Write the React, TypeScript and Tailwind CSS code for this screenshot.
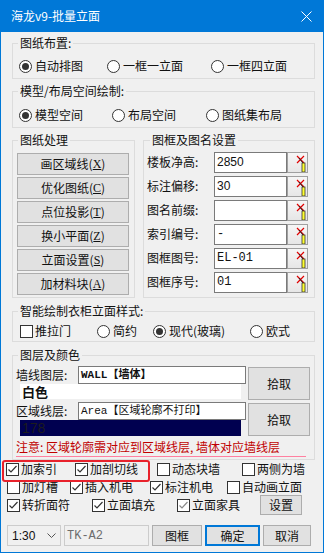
import React from "react";

function Radio({ checked, label }: { checked?: boolean; label: string }) {
  return (
    <div className="flex items-center">
      <span className="w-[13px] h-[13px] rounded-full border border-[#333333] bg-white flex items-center justify-center shrink-0">
        {checked ? <span className="w-[7px] h-[7px] rounded-full bg-[#333333]" /> : null}
      </span>
      <span className="ml-[3px] whitespace-nowrap">{label}</span>
    </div>
  );
}

function Check({ checked, label, gray }: { checked?: boolean; label: string; gray?: boolean }) {
  return (
    <div className="flex items-center">
      <span className="w-[13px] h-[13px] border border-[#333333] bg-white flex items-center justify-center shrink-0">
        {checked ? (
          <svg width="11" height="11" viewBox="0 0 11 11">
            <path d="M1.5 5.5 L4 8 L9.5 2" fill="none" stroke={gray ? "#8a8a8a" : "#333333"} strokeWidth="1.2" />
          </svg>
        ) : null}
      </span>
      <span className="ml-[2px] whitespace-nowrap">{label}</span>
    </div>
  );
}

function PickIcon() {
  return (
    <div className="w-[21px] h-[21px] border border-[#a0a0a0] bg-[linear-gradient(#f6f6f6,#e6e6e6)] shrink-0 relative">
      <svg width="19" height="19" viewBox="0 0 19 19" className="absolute left-0 top-0">
        <path d="M9 3 L16 10 M16 3 L9 10" stroke="#e00000" strokeWidth="1.2" fill="none" />
        <path d="M11 5 L15 10" stroke="#222" strokeWidth="1" fill="none" />
        <rect x="14" y="10" width="3" height="9" fill="#ffff30" stroke="#333" strokeWidth="0.8" />
      </svg>
    </div>
  );
}

function Btn({ label, k }: { label: string; k: string }) {
  return (
    <div className="h-[22px] w-[112px] bg-[#e1e1e1] border border-[#adadad] flex items-center justify-center text-[12px] leading-[16px]">
      {label}(<span className="underline underline-offset-[1px] font-['Liberation_Serif',serif]">{k}</span>)
    </div>
  );
}

function Field({ label, value, serif }: { label: string; value: string; serif?: boolean }) {
  return (
    <div className="h-[22px] flex items-center">
      <div className="w-[67px] whitespace-nowrap">{label}</div>
      <div
        className={
          serif
            ? "w-[73px] h-[21px] bg-white border border-[#7a7a7a] pl-[2px] flex items-center font-['Liberation_Mono',monospace] text-[12px]"
            : "w-[73px] h-[21px] bg-white border border-[#7a7a7a] pl-[2px] flex items-center font-['Liberation_Sans',sans-serif] text-[12px]"
        }
      >
        {value}
      </div>
      <PickIcon />
    </div>
  );
}

export default function App() {
  return (
    <div className="w-[324px] h-[553px] bg-[#0078d7] flex flex-col relative overflow-hidden font-['Noto_Sans_CJK_SC','Noto_Sans',sans-serif] text-[12px] leading-[16px] text-[#111111]">
      {/* title bar */}
      <div className="h-[32px] flex items-center justify-between pl-[11px] pr-[12px] text-white text-[12px]">
        <span>海龙v9-批量立面</span>
        <svg width="11" height="11" viewBox="0 0 11 11">
          <path d="M0.5 0.5 L10.5 10.5 M10.5 0.5 L0.5 10.5" stroke="white" strokeWidth="1" />
        </svg>
      </div>
      {/* body */}
      <div className="flex-1 mx-[1px] mb-[1px] bg-[#f0f0f0] flex flex-col pt-[3px]">
        {/* group 1 */}
        <fieldset className="ml-[11px] w-[303px] border border-[#dcdcdc]">
          <legend className="ml-[5px] px-[2px] leading-[16px]">图纸布置:</legend>
          <div className="h-[27px] pt-[3px] flex items-center pl-[6px]">
            <div className="w-[88px]"><Radio checked label="自动排图" /></div>
            <div className="w-[104px]"><Radio label="一框一立面" /></div>
            <div><Radio label="一框四立面" /></div>
          </div>
        </fieldset>
        {/* group 2 */}
        <fieldset className="ml-[11px] mt-[4px] w-[303px] border border-[#dcdcdc]">
          <legend className="ml-[5px] px-[2px] leading-[16px]">模型/布局空间绘制:</legend>
          <div className="h-[28px] pt-[4px] flex items-center pl-[6px]">
            <div className="w-[93px]"><Radio checked label="模型空间" /></div>
            <div className="w-[94px]"><Radio label="布局空间" /></div>
            <div><Radio label="图纸集布局" /></div>
          </div>
        </fieldset>
        {/* group 3 */}
        <div className="ml-[11px] mt-[4px] flex gap-[8px]">
          <fieldset className="w-[123px] border border-[#dcdcdc]">
            <legend className="ml-[5px] px-[2px] leading-[16px]">图纸处理</legend>
            <div className="pt-[5px] pb-[2px] pl-[4px] flex flex-col gap-[2px]">
              <Btn label="画区域线" k="X" />
              <Btn label="优化图纸" k="C" />
              <Btn label="点位投影" k="T" />
              <Btn label="换小平面" k="Z" />
              <Btn label="立面设置" k="S" />
              <Btn label="加材料块" k="A" />
            </div>
          </fieldset>
          <fieldset className="w-[172px] border border-[#dcdcdc]">
            <legend className="ml-[6px] px-[2px] leading-[16px]">图框及图名设置</legend>
            <div className="pt-[3px] pb-[4px] pl-[3px] flex flex-col gap-[2px]">
              <Field label="楼板净高:" value="2850" />
              <Field label="标注偏移:" value="30" />
              <Field label="图名前缀:" value="" />
              <Field label="索引编号:" value="-" serif />
              <Field label="图框图号:" value="EL-01" serif />
              <Field label="图框序号:" value="01" serif />
            </div>
          </fieldset>
        </div>
        {/* group 4 */}
        <fieldset className="ml-[11px] mt-[5px] w-[303px] border border-[#dcdcdc]">
          <legend className="ml-[5px] px-[2px] leading-[16px]">智能绘制衣柜立面样式:</legend>
          <div className="h-[22px] pt-[2px] flex items-center pl-[7px]">
            <div className="w-[77px]"><Check label="推拉门" /></div>
            <div className="w-[56px]"><Radio label="简约" /></div>
            <div className="w-[97px]"><Radio checked label="现代(玻璃)" /></div>
            <div><Radio label="欧式" /></div>
          </div>
        </fieldset>
        {/* group 5 */}
        <fieldset className="ml-[11px] mt-[5px] w-[303px] border border-[#dcdcdc]">
          <legend className="ml-[5px] px-[2px] leading-[16px]">图层及颜色</legend>
          <div className="pt-[3px] pb-[2px] pl-[3px] flex flex-col">
            <div className="flex h-[34px]">
              <div className="w-[232px] flex flex-col">
                <div className="flex items-center h-[18px]">
                  <div className="w-[62px] leading-[14px]">墙线图层:</div>
                  <div className="w-[168px] h-[18px] bg-white border border-[#7a7a7a] pl-[2px] flex items-center font-['Liberation_Mono','Noto_Sans_CJK_SC',monospace] font-bold text-[11px]">WALL【墙体】</div>
                </div>
                <div className="ml-[4px] w-[221px] h-[15px] bg-white flex items-center pl-[2px] text-[13px] font-bold leading-[13px]">白色</div>
              </div>
              <div className="w-[62px] h-[33px] mt-[1px] bg-[#e1e1e1] border border-[#adadad] flex items-center justify-center text-[12px]">拾取</div>
            </div>
            <div className="flex h-[35px] mt-[2px]">
              <div className="w-[232px] flex flex-col">
                <div className="flex items-center h-[18px]">
                  <div className="w-[62px] leading-[14px]">区域线层:</div>
                  <div className="w-[168px] h-[18px] bg-white border border-[#7a7a7a] pl-[2px] flex items-center font-['Liberation_Mono','Noto_Sans_CJK_SC',monospace] text-[11px] whitespace-nowrap overflow-hidden">Area【区域轮廓不打印】</div>
                </div>
                <div className="ml-[4px] w-[221px] h-[16px] bg-[#000050] flex items-center pl-[2px] text-[14px] leading-[16px] text-[#1c1c1c] font-['Liberation_Sans',sans-serif]">178</div>
              </div>
              <div className="w-[62px] h-[33px] mt-[1px] bg-[#e1e1e1] border border-[#adadad] flex items-center justify-center text-[12px]">拾取</div>
            </div>
            <div className="h-[20px] w-[290px] flex items-center border-b border-[#ff80a0] text-[#c00000] whitespace-nowrap">
              注意: 区域轮廓需对应到区域线层, 墙体对应墙线层
            </div>
          </div>
        </fieldset>
        {/* checkbox rows */}
        <div className="mt-[1px] h-[16px] flex items-center pl-[5px]">
          <div className="w-[69px]"><Check checked label="加索引" /></div>
          <div className="w-[82px]"><Check checked label="加剖切线" /></div>
          <div className="w-[85px]"><Check label="动态块墙" /></div>
          <div><Check label="两侧为墙" /></div>
        </div>
        <div className="mt-[2px] h-[16px] flex items-center pl-[6px]">
          <div className="w-[63px]"><Check label="加灯槽" /></div>
          <div className="w-[80px]"><Check checked label="插入机电" /></div>
          <div className="w-[77px]"><Check checked label="标注机电" /></div>
          <div><Check label="自动画立面" /></div>
        </div>
        <div className="h-[20px] flex items-center pl-[6px]">
          <div className="w-[85px]"><Check checked label="转折面符" /></div>
          <div className="w-[85px]"><Check checked label="立面填充" /></div>
          <div className="w-[83px]"><Check checked gray label="立面家具" /></div>
          <div className="w-[42px] h-[20px] bg-[#e1e1e1] border border-[#adadad] flex items-center justify-center text-[12px]">设置</div>
        </div>
        {/* bottom row */}
        <div className="mt-[10px] h-[21px] flex items-center pl-[6px]">
          <div className="w-[54px] h-[21px] border border-[#cccccc] bg-[#f0f0f0] flex items-center justify-between pl-[4px] pr-[4px] font-['Liberation_Sans',sans-serif] text-[12px]">
            <span>1:30</span>
            <svg width="9" height="6" viewBox="0 0 9 6">
              <path d="M0.5 0.5 L4.5 4.5 L8.5 0.5" fill="none" stroke="#555" strokeWidth="1" />
            </svg>
          </div>
          <div className="ml-[3px] w-[85px] h-[21px] border border-[#cccccc] bg-[#f0f0f0] flex items-center pl-[2px] text-[#6d6d6d] font-['Liberation_Mono',monospace] text-[12px]">TK-A2</div>
          <div className="ml-[3px] w-[50px] h-[21px] bg-[#e1e1e1] border border-[#adadad] flex items-center justify-center text-[12px]">图框</div>
          <div className="ml-[3px] w-[55px] h-[21px] bg-[#e1e1e1] border-2 border-[#0078d7] flex items-center justify-center text-[12px]">确定</div>
          <div className="ml-[3px] w-[48px] h-[21px] bg-[#e1e1e1] border border-[#adadad] flex items-center justify-center text-[12px]">取消</div>
        </div>
      </div>
      {/* red annotation */}
      <div className="absolute left-[2px] top-[460px] w-[148px] h-[22px] border-2 border-[#e8212b] rounded-[3px]" />
    </div>
  );
}
